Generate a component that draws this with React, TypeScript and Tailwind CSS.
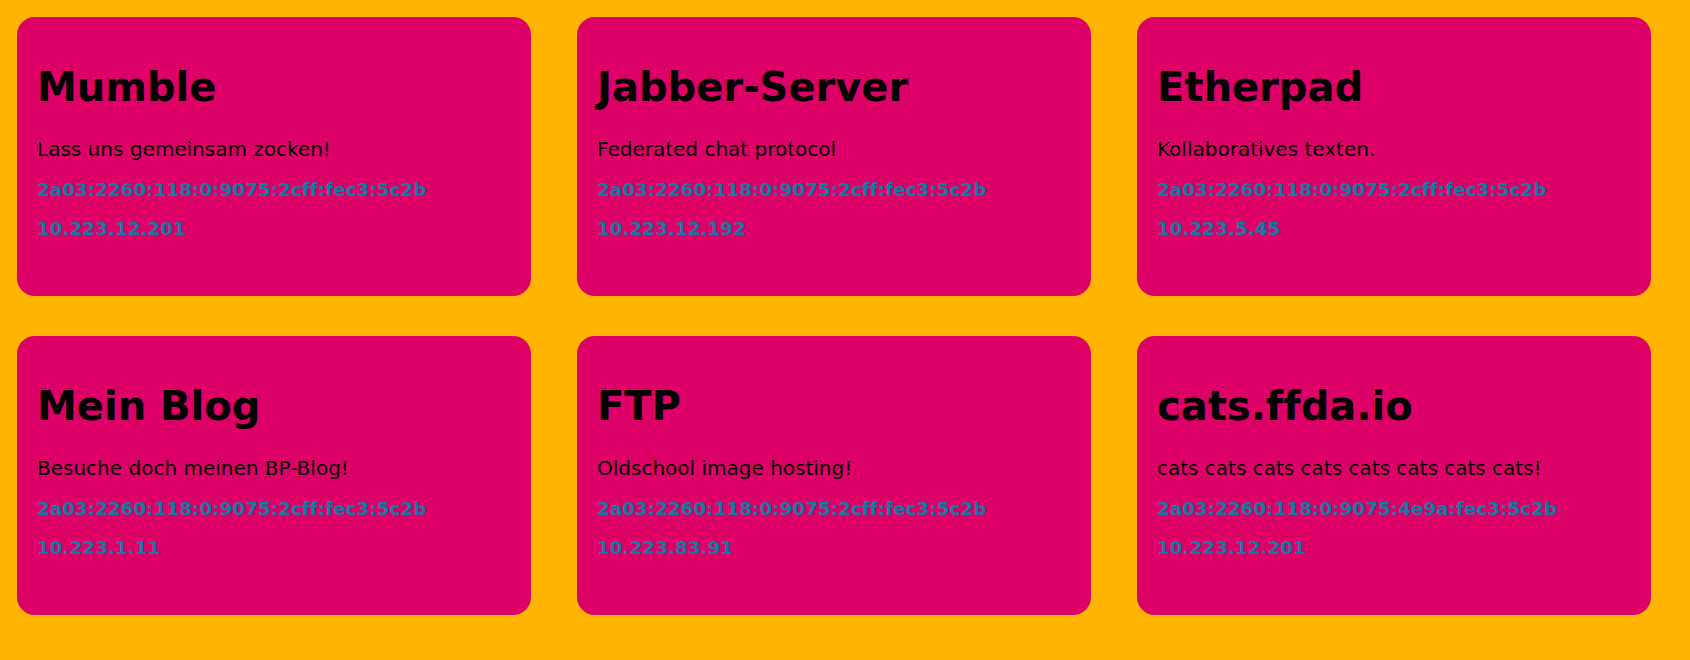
const services = [
  {
    name: 'Mumble',
    description: 'Lass uns gemeinsam zocken!',
    ipv6: '2a03:2260:118:0:9075:2cff:fec3:5c2b',
    ipv4: '10.223.12.201',
  },
  {
    name: 'Jabber-Server',
    description: 'Federated chat protocol',
    ipv6: '2a03:2260:118:0:9075:2cff:fec3:5c2b',
    ipv4: '10.223.12.192',
  },
  {
    name: 'Etherpad',
    description: 'Kollaboratives texten.',
    ipv6: '2a03:2260:118:0:9075:2cff:fec3:5c2b',
    ipv4: '10.223.5.45',
  },
  {
    name: 'Mein Blog',
    description: 'Besuche doch meinen BP-Blog!',
    ipv6: '2a03:2260:118:0:9075:2cff:fec3:5c2b',
    ipv4: '10.223.1.11',
  },
  {
    name: 'FTP',
    description: 'Oldschool image hosting!',
    ipv6: '2a03:2260:118:0:9075:2cff:fec3:5c2b',
    ipv4: '10.223.83.91',
  },
  {
    name: 'cats.ffda.io',
    description: 'cats cats cats cats cats cats cats cats!',
    ipv6: '2a03:2260:118:0:9075:4e9a:fec3:5c2b',
    ipv4: '10.223.12.201',
  },
];

type Service = (typeof services)[number];

function ServiceCard({ service }: { service: Service }) {
  return (
    <div className="h-[279px] rounded-[18px] bg-[#dc0067] px-[20px] pt-[20px] text-black">
      <h1 className="my-[26.8px] text-[40px] font-bold leading-[normal]">{service.name}</h1>
      <p className="text-[20px] leading-[normal]">{service.description}</p>
      <p className="mt-[18px] text-[18.4px] font-bold leading-[normal] text-[#127aa3]">{service.ipv6}</p>
      <p className="mt-[18px] text-[18.4px] font-bold leading-[normal] text-[#127aa3]">{service.ipv4}</p>
    </div>
  );
}

export default function App() {
  return (
    <div className="min-h-screen w-full bg-[#ffb400] pl-[17px] pt-[17px] font-['DejaVu_Sans',sans-serif] [font-variant-ligatures:none]">
      <div className="grid grid-cols-[repeat(3,514px)] gap-x-[46px] gap-y-[40px]">
        {services.map((service) => (
          <ServiceCard key={service.name} service={service} />
        ))}
      </div>
    </div>
  );
}
